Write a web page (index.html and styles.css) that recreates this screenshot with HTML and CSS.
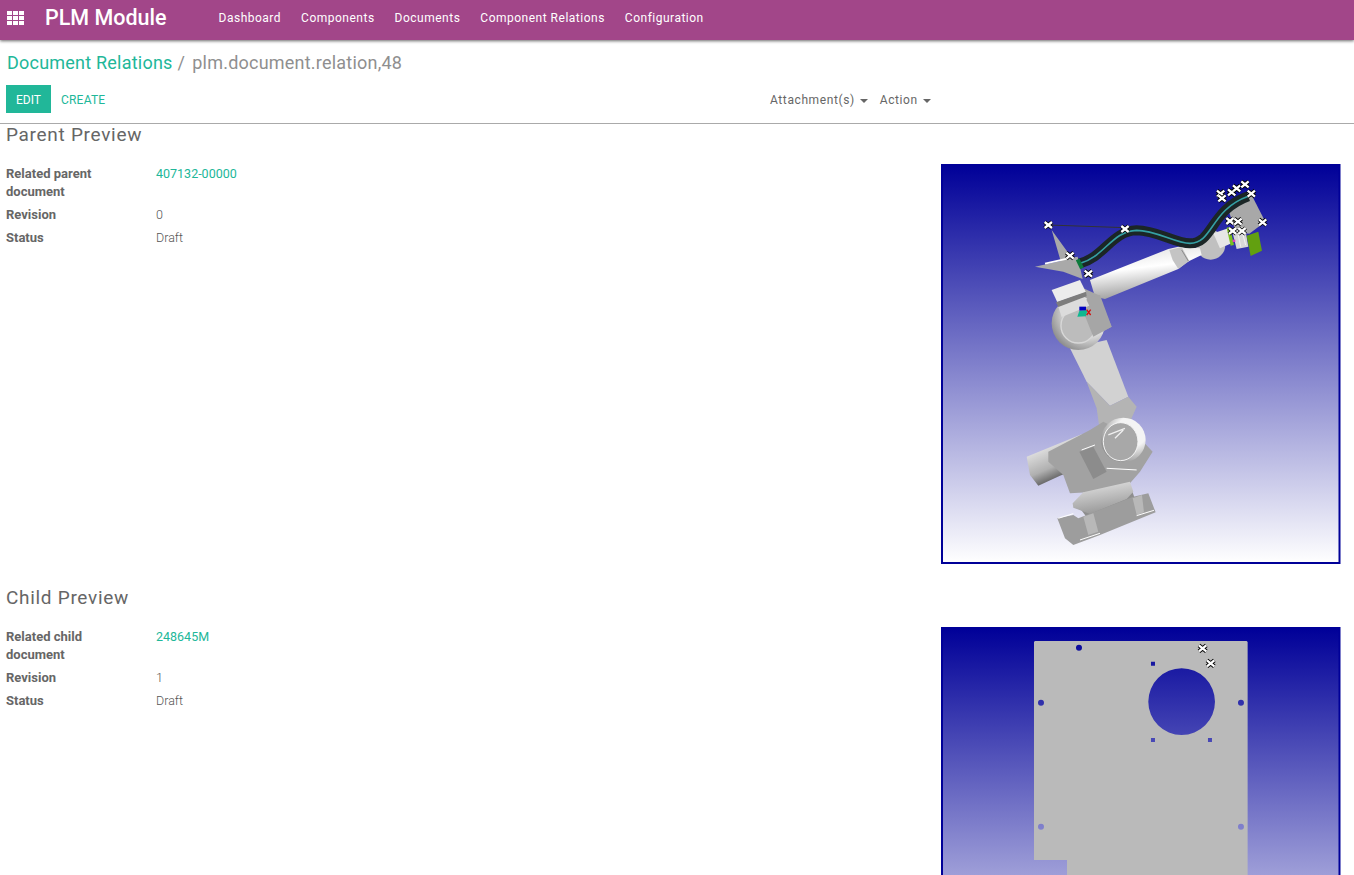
FILE: index.html
```html
<!DOCTYPE html>
<html lang="en">
<head>
    <meta charset="UTF-8">
    <title>plm.document.relation,48 - PLM Module</title>
    <link rel="stylesheet" href="styles.css">
</head>
<body>
    <!-- Top menu -->
    <header class="navbar">
        <svg class="apps-icon" width="18" height="14" viewBox="0 0 18 14">
            <path fill="#fff" d="M0 0h5v4H0zM6 0h5v4H6zM12 0h5v4h-5zM0 5h5v4H0zM6 5h5v4H6zM12 5h5v4h-5zM0 10h5v4H0zM6 10h5v4H6zM12 10h5v4h-5z"/>
        </svg>
        <span class="brand">PLM Module</span>
        <nav class="menu">
            <a href="#">Dashboard</a>
            <a href="#">Components</a>
            <a href="#">Documents</a>
            <a href="#">Component Relations</a>
            <a href="#">Configuration</a>
        </nav>
    </header>

    <!-- Breadcrumb and buttons -->
    <div class="control-panel">
        <div class="breadcrumb">
            <a href="#">Document Relations</a><span class="sep">/</span><span class="current">plm.document.relation,48</span>
        </div>
        <div class="toolbar">
            <div class="buttons">
                <button class="btn-primary" type="button">EDIT</button>
                <button class="btn-link" type="button">CREATE</button>
            </div>
            <div class="dropdowns">
                <span class="dropdown">Attachment(s)<i class="caret"></i></span>
                <span class="dropdown">Action<i class="caret"></i></span>
            </div>
        </div>
    </div>

    <main class="sheet">
        <!-- Parent -->
        <section class="preview">
            <h3>Parent Preview</h3>
            <div class="preview-body">
                <dl class="fields">
                    <dt>Related parent document</dt><dd><a href="#">407132-00000</a></dd>
                    <dt>Revision</dt><dd>0</dd>
                    <dt>Status</dt><dd>Draft</dd>
                </dl>
                <svg class="render" width="400" height="400" viewBox="0 0 400 400">
                    <defs>
                        <linearGradient id="sky" x1="0" y1="0" x2="0" y2="1">
                            <stop offset="0" stop-color="#000098"/>
                            <stop offset="1" stop-color="#ffffff"/>
                        </linearGradient>
                        <linearGradient id="armShade" x1="0.35" y1="0" x2="0.6" y2="1">
                            <stop offset="0" stop-color="#e0e0e0"/>
                            <stop offset="0.4" stop-color="#ffffff"/>
                            <stop offset="1" stop-color="#8f8f8f"/>
                        </linearGradient>
                        <linearGradient id="flangeShade" x1="0" y1="0" x2="0.3" y2="1">
                            <stop offset="0" stop-color="#e8e8e8"/>
                            <stop offset="1" stop-color="#9a9a9a"/>
                        </linearGradient>
                        <linearGradient id="motorShade" x1="0.2" y1="0" x2="0.7" y2="1">
                            <stop offset="0" stop-color="#ffffff"/>
                            <stop offset="0.6" stop-color="#b0b0b0"/>
                            <stop offset="1" stop-color="#222222"/>
                        </linearGradient>
                        <radialGradient id="jointShade" cx="0.7" cy="0.3" r="0.85">
                            <stop offset="0.4" stop-color="#f4f4f4"/>
                            <stop offset="1" stop-color="#7c7c7c"/>
                        </radialGradient>
                        <g id="xmark">
                            <path d="M-11-9 11 9M-11 9 11-9" stroke="#000" stroke-width="12" fill="none"/>
                            <path d="M-11-9 11 9M-11 9 11-9" stroke="#fff" stroke-width="7" fill="none"/>
                        </g>
                    </defs>
                    <rect x="1" y="1" width="398" height="398" fill="url(#sky)"/>
                    <g transform="translate(-11 -9) scale(0.3333)">
                        <!-- lower arm -->
                        <path fill="#d2d2d2" d="M420 580 530 555 595 725 540 752 470 680Z"/>
                        <path fill="#b4b4b4" d="M470 680 540 752 595 725 620 755 600 800 510 830 500 760Z"/>
                        <!-- shoulder motor and body -->
                        <path fill="url(#motorShade)" d="M290 905 455 838 470 930 390 962 325 992 300 960Z"/>
                        <path fill="#a2a2a2" d="M355 890 480 825 520 800 640 860 668 890 630 950 600 985 500 1010 420 1015 400 960 355 920Z"/>
                        <path fill="#8c8c8c" d="M448 890 490 875 530 950 490 972Z"/>
                        <circle cx="580" cy="855" r="67" fill="url(#jointShade)"/>
                        <ellipse cx="572" cy="860" rx="52" ry="57" fill="#a8a8a8" stroke="#f4f4f4" stroke-width="3"/>
                        <path d="M535 840 585 820M555 850 580 825" stroke="#f0f0f0" stroke-width="4" fill="none"/>
                        <path d="M455 885 495 870M530 940 620 945" stroke="#fff" stroke-width="3" fill="none"/>
                        <!-- pedestal and base -->
                        <path fill="#8e8e8e" d="M450 1060 600 990 625 1060 480 1100Z"/>
                        <path fill="url(#flangeShade)" d="M428 1045 460 1012 600 980 610 1010 590 1032 480 1077 430 1058Z"/>
                        <path fill="#9d9d9d" d="M382 1090 430 1080 445 1090 610 1025 655 1015 677 1072 510 1140 430 1170 405 1150Z"/>
                        <path fill="#b8b8b8" d="M460 1085 490 1075 505 1130 475 1140ZM608 1030 636 1020 642 1072 620 1080Z"/>
                        <path d="M385 1090 430 1076M450 1155 510 1135M620 1082 672 1066" stroke="#fff" stroke-width="3" fill="none"/>
                        <!-- upper arm -->
                        <circle cx="842" cy="270" r="44" fill="#c0c0c0"/>
                        <path fill="#e6e6e6" d="M850 235 895 220 905 265 870 280Z"/>
                        <path fill="url(#armShade)" d="M480 375 715 282 745 275 810 280 815 300 770 322 745 342 525 432 495 425Z"/>
                        <path fill="#c4c4c4" d="M718 285 755 276 778 318 745 342 728 315Z"/>
                        <path d="M755 285 775 318" stroke="#8a8a8a" stroke-width="3" fill="none"/>
                        <!-- joint 3 housing -->
                        <path fill="#a6a6a6" d="M460 400 505 420 545 515 480 550 390 490 420 445Z"/>
                        <circle cx="445" cy="505" r="80" fill="url(#jointShade)"/>
                        <circle cx="445" cy="512" r="52" fill="#bcbcbc" stroke="#d8d8d8" stroke-width="4"/>
                        <path fill="#a6a6a6" d="M470 430 510 420 545 515 490 545 460 470Z"/>
                        <path fill="#ececec" d="M365 405 450 375 468 412 382 442Z"/>
                        <path fill="#dcdcdc" d="M385 455 465 425 478 452 395 486Z"/>
                        <path fill="#7d7d7d" d="M378 442 468 410 470 424 385 456Z"/>
                        <!-- tool plate -->
                        <path fill="#a9a9a9" d="M365 225 425 308 443 305 458 372 400 350 315 335 392 318Z"/>
                        <path d="M345 326 425 308" stroke="#fff" stroke-width="5" fill="none"/>
                        <!-- wrist and tool -->
                        <path fill="#a8a8a8" d="M890 150 960 110 1006 200 958 236 918 232Z"/>
                        <path fill="#d8d8d8" d="M905 222 945 215 955 275 920 282Z"/>
                        <path fill="none" stroke="#fff" stroke-width="2" d="M925 240 932 275M938 235 947 270"/>
                        <path fill="#62a010" d="M950 242 985 230 996 287 962 303Z"/>
                        <path fill="#7ac020" d="M890 218 900 216 912 270 902 272Z"/>
                        <rect x="908" y="254" width="8" height="7" fill="#e040c0"/>
                        <!-- hose -->
                        <path d="M355 210 585 218" stroke="#333" stroke-width="3" fill="none"/>
                        <path d="M448 326C525 305 545 228 620 226 680 226 735 265 780 265 850 265 840 165 955 124" stroke="#1b2626" stroke-width="30" fill="none"/>
                        <path d="M448 326C525 305 545 228 620 226 680 226 735 265 780 265 850 265 840 165 955 124" stroke="#35a0a4" stroke-width="5" fill="none"/>
                        <path d="M443 313 456 340" stroke="#0d7a3c" stroke-width="12" fill="none"/>
                        <!-- small frame marker -->
                        <rect x="448" y="455" width="20" height="12" fill="#0000c0"/>
                        <path fill="#10b890" d="M448 468 472 466 468 484 442 485Z"/>
                        <path d="M470 464 482 480M482 464 470 480" stroke="#d01010" stroke-width="4"/>
                        <!-- construction points -->
                        <use href="#xmark" x="355" y="210"/>
                        <use href="#xmark" x="585" y="222"/>
                        <use href="#xmark" x="475" y="356"/>
                        <use href="#xmark" x="420" y="302"/>
                        <use href="#xmark" x="872" y="116"/>
                        <use href="#xmark" x="876" y="130"/>
                        <use href="#xmark" x="905" y="112"/>
                        <use href="#xmark" x="920" y="100"/>
                        <use href="#xmark" x="945" y="88"/>
                        <use href="#xmark" x="964" y="116"/>
                        <use href="#xmark" x="998" y="202"/>
                        <use href="#xmark" x="900" y="198"/>
                        <use href="#xmark" x="924" y="200"/>
                        <use href="#xmark" x="936" y="228"/>
                        <use href="#xmark" x="908" y="228"/>
                    </g>
                    <rect x="1" y="1" width="397.5" height="398" fill="none" stroke="#000098" stroke-width="2"/>
                </svg>
            </div>
        </section>

        <!-- Child -->
        <section class="preview">
            <h3>Child Preview</h3>
            <div class="preview-body">
                <dl class="fields">
                    <dt>Related child document</dt><dd><a href="#">248645M</a></dd>
                    <dt>Revision</dt><dd>1</dd>
                    <dt>Status</dt><dd>Draft</dd>
                </dl>
                <svg class="render" width="400" height="400" viewBox="0 0 400 400">
                    <rect x="1" y="1" width="398" height="398" fill="url(#sky)"/>
                    <g transform="translate(-11 -7) scale(0.3333)">
                        <path fill="#bababa" fill-rule="evenodd" d="M312 66 315 63H950L953 66V1220H411V720H312ZM655 245A100 100 0 1 0 855 245 100 100 0 1 0 655 245ZM438 83A9 9 0 1 0 456 83 9 9 0 1 0 438 83ZM324 248A9 9 0 1 0 342 248 9 9 0 1 0 324 248ZM924 248A9 9 0 1 0 942 248 9 9 0 1 0 924 248ZM324 620A9 9 0 1 0 342 620 9 9 0 1 0 324 620ZM924 620A9 9 0 1 0 942 620 9 9 0 1 0 924 620ZM663 125H675V137H663ZM663 354H675V366H663ZM834 354H846V366H834Z"/>
                        <use href="#xmark" x="818" y="85"/>
                        <use href="#xmark" x="842" y="130"/>
                    </g>
                    <rect x="1" y="1" width="397.5" height="398" fill="none" stroke="#000098" stroke-width="2"/>
                </svg>
            </div>
        </section>
    </main>
</body>
</html>
```

FILE: styles.css
```css
html, body {
    height: 100%;
}
body {
    margin: 0;
    overflow: hidden;
    font-family: "Roboto", sans-serif;
    font-size: 13px;
    color: #666666;
    background-color: #ffffff;
}
a {
    color: #21b799;
    text-decoration: none;
}

/* top menu */
.navbar {
    display: flex;
    align-items: center;
    height: 40px;
    padding-bottom: 5px;
    box-sizing: border-box;
    background-color: #a24689;
    box-shadow: 0 1px 3px rgba(0, 0, 0, 0.6);
    color: #ffffff;
}
.apps-icon {
    margin-left: 7px;
}
.brand {
    margin-left: 20px;
    font-size: 21.5px;
    font-weight: 500;
}
.menu {
    display: flex;
    gap: 20px;
    margin-left: 52px;
}
.menu a {
    color: #ffffff;
    font-size: 12px;
    letter-spacing: 0.5px;
}

/* breadcrumb and buttons */
.control-panel {
    padding: 0 6px;
    border-bottom: 1px solid #aaaaaa;
    height: 83px;
}
.breadcrumb {
    display: flex;
    align-items: center;
    height: 45px;
    padding-left: 1px;
    font-size: 18px;
    letter-spacing: 0.22px;
}
.sep {
    margin: 0 7px 0 5px;
    color: #8f8f8f;
}
.current {
    color: #8f8f8f;
}
.toolbar {
    display: flex;
    height: 28px;
}
.buttons {
    display: flex;
    width: 764px;
}
.btn-primary, .btn-link {
    border: none;
    font-family: "Roboto", sans-serif;
    font-size: 12px;
    height: 28px;
    padding: 2px 10px 0;
    cursor: pointer;
}
.btn-primary {
    width: 45px;
    padding-left: 0;
    padding-right: 0;
    background-color: #21b799;
    color: #ffffff;
}
.btn-link {
    background: none;
    color: #21b799;
    letter-spacing: 0.2px;
}
.dropdowns {
    display: flex;
    align-items: center;
    gap: 12px;
    padding-top: 2px;
}
.dropdown {
    font-size: 12px;
    letter-spacing: 0.6px;
    color: #666666;
}
.caret {
    display: inline-block;
    margin-left: 5px;
    vertical-align: middle;
    border-top: 4px solid #666666;
    border-left: 4px solid transparent;
    border-right: 4px solid transparent;
}

/* form sheet */
.sheet {
    padding: 0 13px 0 6px;
}
.preview {
    margin-bottom: 23px;
}
.preview h3 {
    margin: 0;
    height: 40px;
    box-sizing: border-box;
    font-size: 19px;
    font-weight: 400;
    line-height: 22px;
    letter-spacing: 0.7px;
    color: #666666;
}
.preview-body {
    display: flex;
    justify-content: space-between;
    align-items: flex-start;
}
.render {
    display: block;
}
.fields {
    display: grid;
    grid-template-columns: 150px auto;
    row-gap: 5px;
    align-content: start;
    margin: 1px 0 0;
    line-height: 18px;
}
.fields dt {
    width: 110px;
    font-weight: 700;
}
.fields dd {
    margin: 0;
    font-size: 12.5px;
    font-weight: 300;
    color: #555555;
}
.fields dd a {
    font-weight: 400;
    color: #21b799;
}
```
